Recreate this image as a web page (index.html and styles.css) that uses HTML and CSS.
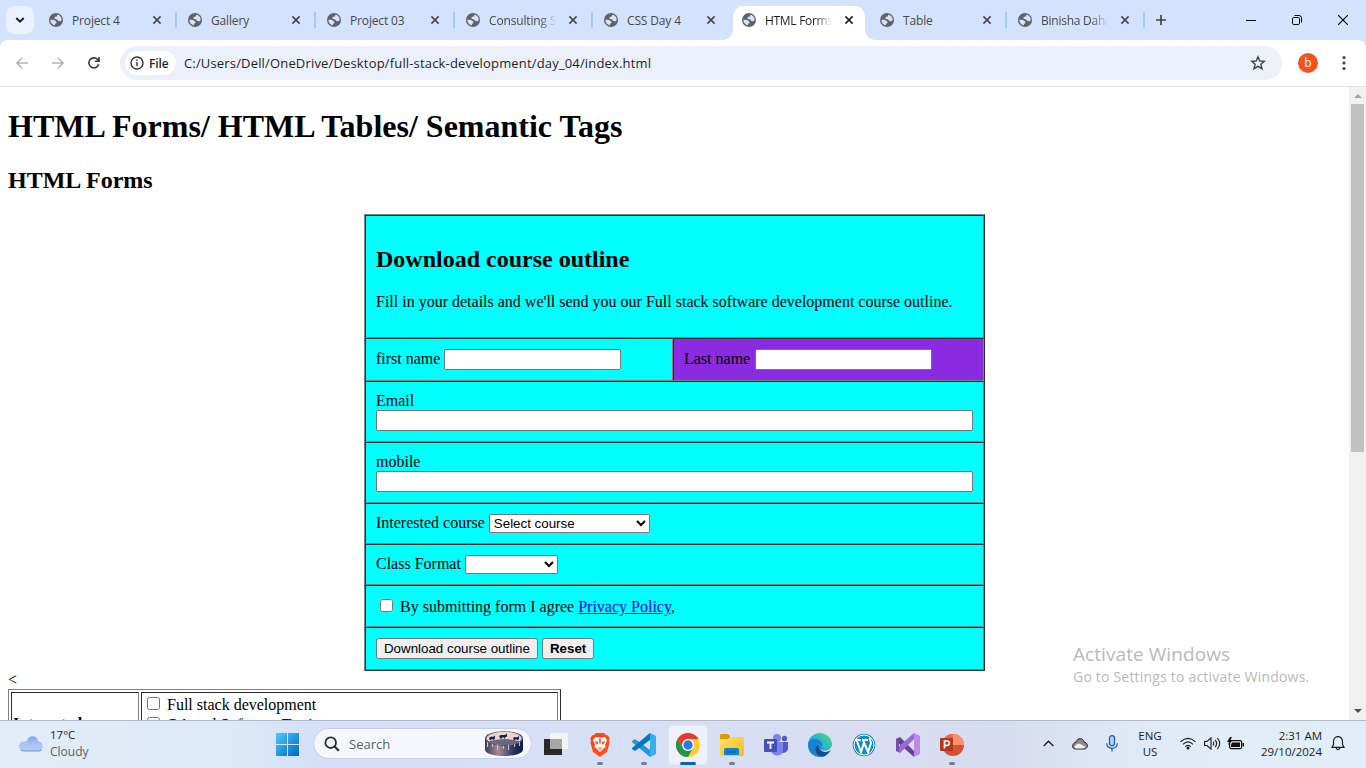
FILE: index.html
```html
<!DOCTYPE html>
<html lang="en">
<head>
<meta charset="utf-8">
<title>HTML Forms</title>
<link rel="stylesheet" href="styles.css">
</head>
<body>
<svg class="defs" width="0" height="0">
  <symbol id="globe" viewBox="0 0 14 14"><circle cx="7" cy="7" r="7" fill="#5f6368"/><path d="M8.4 1.6 11 2.8 12.5 5.2 12.6 7.2 11.4 8.2 9.2 7.9 8.2 6.4 6 6.1 5.2 5 6.2 3.8 8 3.5ZM1.4 6.8H4.5L6.2 7.8 7.6 9 7.3 10.2 6 10.8 5.8 12.4 3.4 11.3 1.8 9.2Z" fill="#d9e4f6"/></symbol>
  <symbol id="close" viewBox="0 0 10 10"><path d="M1.4 1.4 8.6 8.6M8.6 1.4 1.4 8.6" stroke="currentColor" stroke-width="1.6"/></symbol>
  <linearGradient id="win" x1="0" y1="0" x2="1" y2="1"><stop stop-color="#4cc9fb"/><stop offset="1" stop-color="#0067c5"/></linearGradient>
  <linearGradient id="edge" x1="0" y1="1" x2="1" y2="0"><stop stop-color="#1067bd"/><stop offset=".5" stop-color="#22aee0"/><stop offset="1" stop-color="#60de63"/></linearGradient>
  <linearGradient id="cloud" x1="0" y1="0" x2="0" y2="1"><stop stop-color="#7da6eb"/><stop offset="1" stop-color="#c9dcfb"/></linearGradient>
  <linearGradient id="brave" x1="0" y1="0" x2="1" y2="1"><stop stop-color="#ff3d10"/><stop offset="1" stop-color="#ff5a16"/></linearGradient>
  <linearGradient id="drum" x1="0" y1="0" x2="1" y2="0"><stop stop-color="#3c3b58"/><stop offset=".35" stop-color="#a58b98"/><stop offset=".75" stop-color="#27345e"/><stop offset="1" stop-color="#101b4b"/></linearGradient>
  <linearGradient id="folder" x1="0" y1="0" x2="1" y2="1"><stop stop-color="#ffdf6b"/><stop offset="1" stop-color="#fbbc13"/></linearGradient>
</svg>
<div class="screen">
  <header class="tabs">
    <button class="tab-search"><svg width="10" height="6" viewBox="0 0 10 6"><path d="m1.3 1 3.7 3.6L8.7 1" fill="none" stroke="#1f1f1f" stroke-width="2"/></svg></button>
    <div class="tab wider ruled"><svg class="globe"><use href="#globe"/></svg><span>Project 4</span><svg class="x"><use href="#close"/></svg></div>
    <div class="tab wider ruled"><svg class="globe"><use href="#globe"/></svg><span>Gallery</span><svg class="x"><use href="#close"/></svg></div>
    <div class="tab wider ruled"><svg class="globe"><use href="#globe"/></svg><span>Project 03</span><svg class="x"><use href="#close"/></svg></div>
    <div class="tab ruled"><svg class="globe"><use href="#globe"/></svg><span class="fade">Consulting Services</span><svg class="x"><use href="#close"/></svg></div>
    <div class="tab"><svg class="globe"><use href="#globe"/></svg><span>CSS Day 4</span><svg class="x"><use href="#close"/></svg></div>
    <div class="tab active"><svg class="globe"><use href="#globe"/></svg><span class="fade">HTML Forms</span><svg class="x"><use href="#close"/></svg></div>
    <div class="tab ruled"><svg class="globe"><use href="#globe"/></svg><span>Table</span><svg class="x"><use href="#close"/></svg></div>
    <div class="tab ruled"><svg class="globe"><use href="#globe"/></svg><span class="fade tight">Binisha Dahal</span><svg class="x"><use href="#close"/></svg></div>
    <svg class="plus" width="10" height="10"><path d="M5 0V10M0 5H10" stroke="#444" stroke-width="1.7"/></svg>
    <div class="window-buttons">
      <svg width="10" height="10"><path d="M0 5.5H10" stroke="#000"/></svg>
      <svg width="10" height="10" fill="none" stroke="#000"><rect x=".5" y="2.5" width="7" height="7" rx="1.3"/><path d="M2.5.5H7A2.5 2.5 0 0 1 9.5 3V7.5"/></svg>
      <svg width="10" height="10"><path d="M0 0 10 10M10 0 0 10" stroke="#000" stroke-width="1.1"/></svg>
    </div>
  </header>
  <div class="toolbar-wrap">
  <nav class="toolbar">
    <svg class="nav" viewBox="0 0 12 12"><path d="M12 6H1M6 .8.9 6 6 11.2" fill="none" stroke="#b4b4b4" stroke-width="1.5"/></svg>
    <svg class="nav" viewBox="0 0 12 12"><path d="M0 6H11M6 .8 11.1 6 6 11.2" fill="none" stroke="#b4b4b4" stroke-width="1.5"/></svg>
    <svg class="nav" viewBox="0 0 12 12"><path d="M10.7 7.3A5 5 0 1 1 9.7 2.6L11 4" fill="none" stroke="#3b3b3b" stroke-width="1.6"/><path d="M11.8 0V5H6.8V3.5H10.2V0Z" fill="#3b3b3b"/></svg>
    <div class="address">
      <span class="file"><svg width="14" height="14" viewBox="0 0 14 14"><circle cx="7" cy="7" r="6" fill="none" stroke="#333" stroke-width="1.4"/><path d="M7 6V10.3M7 3.6V5" stroke="#333" stroke-width="1.4"/></svg><b>File</b></span>
      <span class="url">C:/Users/Dell/OneDrive/Desktop/full-stack-development/day_04/index.html</span>
      <svg class="star" width="16" height="16" viewBox="0 0 16 16"><path d="M8 1.8 9.8 6 14.3 6.3 10.9 9.2 12 13.7 8 11.3 4 13.7 5.1 9.2 1.7 6.3 6.2 6Z" fill="none" stroke="#444" stroke-width="1.4"/></svg>
    </div>
    <span class="avatar">b</span>
    <svg class="dots" width="4" height="16"><circle cx="2" cy="2.5" r="1.6"/><circle cx="2" cy="8" r="1.6"/><circle cx="2" cy="13.5" r="1.6"/></svg>
  </nav>
  </div>
  <div class="viewport">
    <main class="page">
      <h1>HTML Forms/ HTML Tables/ Semantic Tags</h1>
      <h2>HTML Forms</h2>
      <table class="form">
        <colgroup><col class="col-first"><col class="col-last"></colgroup>
        <tr class="r-head"><td colspan="2"><h2>Download course outline</h2><p>Fill in your details and we'll send you our Full stack software development course outline.</p></td></tr>
        <tr class="r-name"><td>first name <input type="text" class="short"></td><td class="last">Last name <input type="text" class="short"></td></tr>
        <tr class="r-wide"><td colspan="2">Email<input type="text" class="wide"></td></tr>
        <tr class="r-wide"><td colspan="2">mobile<input type="text" class="wide"></td></tr>
        <tr class="r-select"><td colspan="2">Interested course <select class="course"><option>Select course</option></select></td></tr>
        <tr class="r-select"><td colspan="2">Class Format <select class="format"><option></option></select></td></tr>
        <tr class="r-agree"><td colspan="2"><input type="checkbox"> By submitting form I agree <a href="#">Privacy Policy</a><u>,</u></td></tr>
        <tr class="r-name"><td colspan="2"><button>Download course outline</button> <button><b>Reset</b></button></td></tr>
      </table>
      <div class="stray">&lt;</div>
      <table class="courses">
        <tr><th>Interested course</th><td><label><input type="checkbox"> Full stack development</label><label><input type="checkbox"> QA and Software Testing</label><label><input type="checkbox"> Graphic Design</label></td></tr>
      </table>
    </main>
    <div class="scrollbar"><i class="up"></i><i class="thumb"></i><i class="down"></i></div>
    <div class="watermark"><div class="big">Activate Windows</div><div class="small">Go to Settings to activate Windows.</div></div>
  </div>
  <footer class="taskbar">
    <div class="weather">
      <svg width="26" height="18" viewBox="0 0 26 18"><path d="M9 6C10 0 19-.5 20 6 26 7 26 15 20 16H6C-1 15 0 7 6 7Z" fill="url(#cloud)"/><path d="M1 12C0 7 6 5 9 8 11 8 12 10 12 11 17 7 24 8 25 12 24 15 22 16 20 16H6Q2 16 1 12Z" fill="#a9c5f6" opacity=".75"/><path d="M3 15.3Q5 16 7 16H20Q22 16 23.5 15" fill="none" stroke="#6d94e0"/></svg>
      <div><div class="temp">17°C</div><div class="cond">Cloudy</div></div>
    </div>
    <svg class="start" width="23" height="23"><path d="M0 0H11V11H0ZM12 0H23V11H12ZM0 12H11V23H0ZM12 12H23V23H12Z" fill="url(#win)"/></svg>
    <div class="search">
      <svg width="16" height="16" viewBox="0 0 16 16" fill="none" stroke="#2b2b2b" stroke-width="1.8"><circle cx="6.7" cy="6.7" r="5.3"/><path d="m10.6 10.6 4.2 4.2" stroke-width="2.1"/></svg>
      <span>Search</span>
      <svg class="drum" width="38" height="26" viewBox="0 0 38 26"><path d="M0 7V19C2 27 36 27 38 19V7Z" fill="url(#drum)"/><ellipse cx="19" cy="7.5" rx="19" ry="7.3" fill="#4b4a68"/><ellipse cx="19" cy="7.3" rx="17.5" ry="6.6" fill="#ecd5c6"/><path d="M3 10.5Q19 5.5 35 10.5 32 14 19 14T3 10.5Z" fill="#6a6680"/><path d="m4 7 2-1.5 2 .5 2-1.5v2.5L9 9 7 8 5 9.500ZM14 5l2-1h4l2-1.500v3l-2 1v2l-1-2h-2l-1 2ZM28 7l2-1 2 .5 2-1.500v2.500l-1 2-2-1.500-2 1.500Z" fill="#171c5a"/><path d="M2.500 11v5m5-3v3m5-2v5m6-4v3m5-4v5m6-6v3m5-5v4" stroke="#d4c2cb"/></svg>
    </div>
    <div class="apps">
      <div class="app"><svg viewBox="0 0 24 24"><path d="M0 6H18V22H0Z" fill="#292927"/><path d="M6 0H24V16H6Z" fill="#f4f4f4"/><path d="M6 6H18V16H6Z" fill="#a6a6a6"/></svg></div>
      <div class="app run"><svg viewBox="0 0 24 24"><path d="m8 0-2 2-2 .5L2.500 5l.5 3-.5 2 2.500 9 7 5 7-5 2.500-9-.5-2 .5-3L20 2.500 18 2 16 0Z" fill="url(#brave)"/><path d="m12 4.500 5-.5 2 3.500-2 4 .5 2.500-2.500 2-3 3-3-3-2.500-2 .5-2.500-2-4L7 4Z" fill="#fff"/><path d="m6.500 8 4 1-1.500 3ZM17.500 8l-4 1 1.500 3ZM9 14l3 1 3-1-3 2.500ZM11 5.500h2l-.6 6h-.8Z" fill="#ff4714"/></svg></div>
      <div class="app run"><svg viewBox="0 0 24 24"><path d="m0 8 3-2 15 11V24L0 9Z" fill="#2196dc"/><path d="m0 16 3 2L18 7V0L0 15Z" fill="#0875bc"/><path d="m18 0 6 3V21l-6 3Z" fill="#35adef"/></svg></div>
      <div class="app run current"><svg viewBox="0 0 24 24"><circle cx="12" cy="12" r="12" fill="#ffce2e"/><path d="M12 12 7 15 1.6 6A12 12 0 0 1 22.4 6H12Z" fill="#e33b2e"/><path d="M1.6 6A12 12 0 0 0 12 24L17.2 15 7 15Z" fill="#23954b"/><circle cx="12" cy="12" r="6" fill="#fff"/><circle cx="12" cy="12" r="4.7" fill="#2d78e5"/></svg></div>
      <div class="app run"><svg viewBox="0 0 24 24"><path d="M0 2 1 1H8L10 3V10H0Z" fill="#d99a00"/><path d="M0 6H8L10 4H23L24 5V22L23 23H1L0 22Z" fill="url(#folder)"/><path d="M4 22V17Q4 15 6 15H17Q19 15 19 17V22Z" fill="#0f83d3"/><path d="M7 19H16" stroke="#06569a"/></svg></div>
      <div class="app"><svg viewBox="0 0 24 24"><circle cx="13" cy="5" r="4" fill="#7b83eb"/><circle cx="20.500" cy="5.500" r="2.700" fill="#5059c9"/><path d="M17 9H24V16Q23 20 18 20Z" fill="#5059c9"/><path d="M7 9H19V18C18 24 9 24 7 18Z" fill="#7b83eb"/><rect y="6" width="13" height="13" rx="1" fill="#464eb8"/><path d="M3 9.500H10M6.500 9.500V16" stroke="#fff" stroke-width="1.800"/></svg></div>
      <div class="app"><svg viewBox="0 0 24 24"><circle cx="12" cy="12" r="12" fill="url(#edge)"/><path d="M0 11C2 5 12 4 14 11 15 13 13 13 13 15 14 18 19 18 22 16 16 27 3 24 1 16Z" fill="#1582d2"/><path d="M9 12C5 18 10 24 15 23.600 20 22 22 18 22 17 17 20 13 18 12 15Z" fill="#124d91"/><path d="M12 11C9 14 13 18 18 17.500 22 17 24 14 24 12L25 16 22 17.500Q18 20 14 18 9 15 12 11Z" fill="#d8e0f5"/></svg></div>
      <div class="app"><svg viewBox="0 0 24 24"><circle cx="12" cy="12" r="11.300" fill="#148cbd"/><circle cx="12" cy="12" r="10" fill="none" stroke="#fff" stroke-width="1"/><path d="M3 7H9M10 7H16M4.500 7 9 19 12 10M11 7l5 12 3-9c0-2-2-3-1-5" fill="none" stroke="#fff" stroke-width="2"/></svg></div>
      <div class="app"><svg viewBox="0 0 24 24"><path d="m0 6 4-2 14 14v6L0 8Z" fill="#64439b"/><path d="m0 18 4 2L18 6V0L0 16Z" fill="#9c68d3"/><path d="M0 6 3 5V19L0 18Z" fill="#75509e"/><path d="m18 0 6 3V21l-6 3Z" fill="#bd8aec"/></svg></div>
      <div class="app run"><svg viewBox="0 0 24 24"><circle cx="13" cy="12" r="11" fill="#d35230"/><path d="M13 1A11 11 0 0 1 24 12H13Z" fill="#ff8f6b"/><path d="M13 1A11 11 0 0 0 2 12H13Z" fill="#ed6c47"/><rect y="5" width="13" height="13" rx="1" fill="#b7371b"/><path d="M4.500 15.500V8H7.200a2.100 2.100 0 0 1 0 4.300H4.500" fill="none" stroke="#fff" stroke-width="1.700"/></svg></div>
    </div>
    <div class="tray">
      <svg class="chev" width="11" height="7" fill="none" stroke="#1b1b1b" stroke-width="1.300"><path d="M.7 6 5.500 1.200 10.300 6"/></svg>
      <svg class="od" width="16" height="12"><path d="M4 11C-1 11 0 5 4 4 6-1 11 0 12 4 17 5 16 11 12 11Z" fill="#888" stroke="#222"/><path d="M2 9Q6 3 10 7L14 9Q12 10.500 10 10.500H4Z" fill="#eee"/></svg>
      <svg class="mic" width="12" height="17" fill="none" stroke="#1559b4" stroke-width="1.200"><rect x="3.500" y=".7" width="5" height="10" rx="2.500" fill="#b7d3f7"/><path d="M.7 8.300C.7 15 11.300 15 11.300 8.300M6 13.300V16.500"/></svg>
      <div class="lang">ENG<br>US</div>
      <svg class="wifi" width="16" height="13" fill="none" stroke="#1b1b1b" stroke-width="1.100"><path d="M.5 4.800Q8-2 15.500 4.800M3 7.300Q8 2.500 13 7.300M5.200 9.700Q8 7 10.800 9.700"/><circle cx="8" cy="11" r="1" fill="#111"/></svg>
      <svg class="vol" width="17" height="13" fill="none" stroke="#1b1b1b" stroke-width="1.100"><path d="M.6 4.500H3L7 .9V12.100L3 8.500H.6ZM9 4.500Q10.500 6.500 9 8.500M11.200 2.800Q14 6.500 11.200 10.200M13.400 1Q18 6.500 13.400 12"/></svg>
      <svg class="bat" width="17" height="13"><rect x="2.600" y="3.600" width="12" height="8" rx="1.500" fill="none" stroke="#111" stroke-width="1.200"/><path d="M5 5.500H13V10H4V8ZM15.500 6H17V9.500H15.500Z" fill="#111"/><path d="M3 0 0 5H2L1 8 6 3H3.500L5 0Z" fill="#111"/></svg>
      <div class="clock">2:31 AM<br>29/10/2024</div>
      <svg class="bell" width="14" height="15" fill="none" stroke="#1b1b1b" stroke-width="1.200"><path d="M1 11.300H13L11.500 8.500V5.500C11.500-1 2.500-1 2.500 5.500V8.500ZM5 12Q7 15.500 9 12"/></svg>
    </div>
  </footer>
</div>
</body>
</html>
```
FILE: styles.css
```css
* { box-sizing: border-box; }
body { margin: 0; overflow: hidden; font-family: "Liberation Serif", serif; }
svg { display: block; flex: none; }
.defs { position: absolute; }
.screen { width: 1366px; height: 768px; display: flex; flex-direction: column; background: #fff; }

/* tab strip */
.tabs { height: 40px; flex: none; display: flex; background: #d3e3fd; font: 12px "Open Sans", sans-serif; color: #474747; }
.tab-search { width: 28px; height: 28px; margin: 6px 8px 0 6px; padding: 0; border: 0; border-radius: 9px; background: #ebf1fd; display: flex; align-items: center; justify-content: center; }
.tab { flex: none; width: 138px; height: 40px; display: flex; align-items: center; padding: 0 19px 0 7px; position: relative; }
.wider { width: 139px; }
.ruled { background: linear-gradient(#a8c7fa, #a8c7fa) right 4px top 12px / 2px 16px no-repeat; }
.tab span { flex: 1; margin-left: 9px; white-space: nowrap; overflow: hidden; letter-spacing: -.15px; }
.tab .globe { width: 14px; height: 14px; }
.tab .x { width: 10px; height: 10px; }
.tab .fade { margin-right: 12px; -webkit-mask-image: linear-gradient(90deg, #000 75%, transparent); mask-image: linear-gradient(90deg, #000 75%, transparent); }
.tab .tight { letter-spacing: -.25px; }
.active { width: 132px; height: 34px; margin: 6px 8px 0 -2px; padding: 0 11px 6px 9px; background: #fff; border-radius: 10px 10px 0 0; color: #1f1f1f; }
.active .fade { letter-spacing: -.3px; }
.active::before, .active::after { content: ""; position: absolute; bottom: 0; width: 10px; height: 10px; }
.active::before { left: -10px; background: radial-gradient(circle at 0 0, #d3e3fd 9.5px, #fff 10px); }
.active::after { right: -10px; background: radial-gradient(circle at 100% 0, #d3e3fd 9.5px, #fff 10px); }
.plus { margin: 15px 0 0 7px; }
.window-buttons { display: flex; gap: 36px; margin: 15px 18px 0 auto; }

/* toolbar */
.toolbar-wrap { background: #d3e3fd; flex: none; }
.toolbar { height: 47px; background: #fff; border-bottom: 1px solid #e0e0e0; border-radius: 8px 8px 0 0; display: flex; align-items: center; padding: 0 20px 0 16px; font-family: "Open Sans", sans-serif; }
.nav { width: 12px; height: 12px; margin-right: 24px; }
.address { width: 1162px; height: 34px; margin-left: -4px; padding: 0 16px 0 5px; border-radius: 17px; background: #ecf0fa; display: flex; align-items: center; color: #1f1f1f; }
.file { width: 51px; height: 24px; background: #fff; border-radius: 12px; display: flex; align-items: center; padding-left: 5px; font-size: 12px; }
.file b { margin-left: 5px; font-weight: 600; letter-spacing: -.1px; }
.url { margin-left: 8px; font-size: 13px; letter-spacing: .165px; white-space: nowrap; }
.star { margin-left: auto; }
.avatar { width: 20px; height: 20px; margin-left: 16px; border-radius: 50%; background: #f4511e; color: #fff; font-size: 12px; line-height: 19px; text-align: center; }
.dots { margin-left: auto; fill: #444; }

/* browser content */
.viewport { position: relative; height: 633px; flex: none; display: flex; overflow: hidden; }
.page { width: 1349px; padding: 0 8px; font-size: 16px; line-height: 18px; }
.page h1 { margin: 21px 0 22px; font-size: 32px; line-height: 37px; }
.page > h2 { margin: 0 0 20px; font-size: 24px; line-height: 27px; }
.form { width: 621px; margin: 0 auto; border: 1px solid; border-color: #808080 #2c2c2c #2c2c2c #808080; border-spacing: 0; table-layout: fixed; background: #0ff; }
.form td { padding: 0 10px; border: 1px solid; border-color: #2c2c2c #808080 #808080 #2c2c2c; }
.form h2 { margin: 0; font-size: 24px; line-height: 27px; }
.form .r-head td { padding-top: 10px; }
.form p { margin: 20px 0 6px; }
.col-first { width: 308px; }
.col-last { width: 311px; }
.r-head { height: 123px; }
.r-name { height: 43px; }
.r-wide { height: 61px; }
.r-select { height: 41px; }
.r-agree { height: 42px; }
.form .last { background: #8a2be2; }
.short { width: 177px; height: 21px; }
.last .short { margin-left: 1px; }
.wide { display: block; width: 597px; height: 21px; }
select { height: 19px; font: 13.333px "Liberation Sans", sans-serif; }
.course { width: 161px; }
.format { width: 93px; }
button { font-family: "Liberation Sans", sans-serif; }
.form button { height: 21px; }
.stray { height: 18px; }
.courses { width: 553px; border: 1px solid; border-color: #808080 #2c2c2c #2c2c2c #808080; border-spacing: 2px; }
.courses th, .courses td { border: 1px solid; border-color: #2c2c2c #808080 #808080 #2c2c2c; padding: 1px; text-align: left; }
.courses th { width: 128px; }
.courses label { display: block; height: 20px; line-height: 22px; white-space: nowrap; }
.scrollbar { width: 17px; background: #f1f1f1; display: flex; flex-direction: column; align-items: center; }
.up, .down { width: 0; height: 0; border: 4px solid transparent; }
.up { border-top: 0; border-bottom-color: #a3a3a3; margin-top: 7px; }
.thumb { width: 13px; height: 348px; margin-top: 6px; background: #c1c1c1; }
.down { border-bottom: 0; border-top-color: #505050; margin: auto 0 7px; }
.watermark { position: absolute; left: 1073px; top: 554px; color: #b9b9b9; font-family: "Open Sans", sans-serif; white-space: nowrap; }
.big { font-size: 19px; line-height: 26px; letter-spacing: .07px; }
.small { font-size: 14px; line-height: 20px; letter-spacing: .2px; }

/* taskbar */
.taskbar { height: 48px; flex: none; border-top: 1px solid #b1bac9; background: linear-gradient(90deg, #e1edf7 0, #dce9f7 17%, #d3dff8 24%, #d8e0f5 45%, #d8dcf0 74%, #e0ebf7 84%, #e1eef8); display: flex; align-items: center; font: 12px "Open Sans", sans-serif; color: #1b1b1b; }
.weather { width: 257px; margin-left: 18px; display: flex; align-items: center; gap: 6px; padding-bottom: 2px; }
.temp, .cond { line-height: 17px; }
.temp { font-size: 11.5px; line-height: 16px; }
.cond { color: #5b5f66; font-size: 12px; }
.start { margin-left: 1px; }
.search { width: 219px; height: 31px; margin: 0 0 2px 14px; padding: 0 8px 0 10px; display: flex; align-items: center; background: #f4f7fd; border: 1px solid #c8d0e2; border-radius: 16px; font-size: 13px; color: #5d5d5d; }
.search span { margin-left: 9px; }
.drum { margin-left: auto; }
.apps { display: flex; margin-left: 5px; gap: 6px; }
.app { width: 38px; height: 38px; padding: 7px; position: relative; border-radius: 4px; }
.app svg { width: 24px; height: 24px; }
.run::after { content: ""; position: absolute; left: 16px; bottom: -1px; width: 6px; height: 3px; border-radius: 2px; background: #797e8a; }
.current { background: #eef1fa; box-shadow: 0 0 0 1px #e3e7f3; }
.current::after { left: 11px; width: 16px; background: #0067c0; }
.tray { margin-left: auto; display: flex; align-items: center; padding: 0 21px 2px 0; font-size: 11.5px; line-height: 16px; }
.od { margin-left: 18px; }
.mic { margin-left: 18px; }
.lang { width: 24px; margin-left: 20px; text-align: center; }
.wifi { margin-left: 18px; }
.vol { margin-left: 8px; }
.bat { margin-left: 6px; }
.clock { width: 64px; margin-left: 14px; text-align: right; }
.bell { margin-left: 9px; }
```
